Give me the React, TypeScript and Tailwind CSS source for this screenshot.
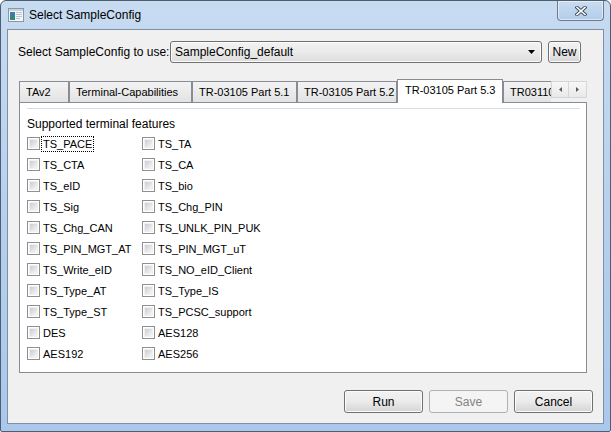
import React from "react";

const Checkbox = ({ label, focus }: { label: string; focus?: boolean }) => (
  <div className="flex items-center h-[21px]">
    <div className="w-[13px] h-[13px] border border-[#8e8f8f] bg-white p-[1px] shrink-0">
      <div className="w-full h-full border border-[#f0f0f0] bg-gradient-to-br from-[#c9cdd3] to-[#f7f7f7]" />
    </div>
    <span
      className={
        focus
          ? "ml-[1px] px-[1px] border border-dotted border-black leading-[14px] whitespace-nowrap text-[11px]"
          : "ml-[1px] px-[1px] border border-transparent leading-[14px] whitespace-nowrap text-[11px]"
      }
    >
      {label}
    </span>
  </div>
);

const Tab = ({ label, w }: { label: string; w: string }) => (
  <div
    className={
      "h-[21px] shrink-0 border border-b-0 border-[#898c95] bg-gradient-to-b from-[#f3f3f3] to-[#e3e3e3] pl-[6px] flex items-center whitespace-nowrap overflow-hidden text-[11px] " +
      w
    }
  >
    {label}
  </div>
);

const Btn = ({ label, disabled, w }: { label: string; disabled?: boolean; w: string }) =>
  disabled ? (
    <div
      className={
        "h-[23px] rounded-[3px] border border-[#adb2b5] bg-[#f4f4f4] text-[#838383] flex items-center justify-center " + w
      }
    >
      {label}
    </div>
  ) : (
    <div
      className={
        "h-[23px] rounded-[3px] border border-[#707070] bg-gradient-to-b from-[#f2f2f2] via-[#ebebeb] to-[#d4d4d4] shadow-[inset_0_0_0_1px_#fcfcfc] flex items-center justify-center " +
        w
      }
    >
      {label}
    </div>
  );

const col1 = [
  "TS_PACE",
  "TS_CTA",
  "TS_eID",
  "TS_Sig",
  "TS_Chg_CAN",
  "TS_PIN_MGT_AT",
  "TS_Write_eID",
  "TS_Type_AT",
  "TS_Type_ST",
  "DES",
  "AES192",
];
const col2 = [
  "TS_TA",
  "TS_CA",
  "TS_bio",
  "TS_Chg_PIN",
  "TS_UNLK_PIN_PUK",
  "TS_PIN_MGT_uT",
  "TS_NO_eID_Client",
  "TS_Type_IS",
  "TS_PCSC_support",
  "AES128",
  "AES256",
];

export default function App() {
  return (
    <div className="w-[611px] h-[432px] bg-white">
      <div className="w-[611px] h-[432px] rounded-t-[6px] rounded-b-[2px] border border-[#4f5d70] bg-gradient-to-b from-[#c7dbf1] via-[#b6d0ed] to-[#a9c8eb] flex flex-col overflow-hidden font-['Liberation_Sans',Arial,sans-serif] text-[12px] text-black">
        {/* Title bar */}
        <div className="h-[28px] flex items-center shrink-0">
          <svg width="16" height="16" viewBox="0 0 16 16" className="ml-[7px] shrink-0">
            <rect x="0.5" y="1.5" width="15" height="13" fill="#f4f6f8" stroke="#8c96a0" />
            <rect x="1" y="2" width="14" height="2" fill="#c5d3e0" />
            <rect x="2" y="5" width="5" height="8" fill="#2e8a7c" />
            <rect x="2" y="5" width="5" height="3" fill="#3f79b8" />
            <rect x="8" y="5" width="6" height="1" fill="#b8c4cf" />
            <rect x="8" y="7" width="6" height="1" fill="#b8c4cf" />
            <rect x="8" y="9" width="6" height="1" fill="#b8c4cf" />
            <rect x="8" y="11" width="4" height="1" fill="#b8c4cf" />
          </svg>
          <span className="ml-[5px]">Select SampleConfig</span>
          <div className="ml-auto mr-[6px] self-start w-[47px] h-[20px] rounded-b-[4px] border border-t-0 border-[#6b7a8e] bg-gradient-to-b from-[#c9dcf1] to-[#b3cdea] shadow-[inset_0_0_0_1px_rgba(255,255,255,0.55)] flex items-center justify-center">
            <svg width="12" height="10" viewBox="0 0 12 10">
              <path d="M2 1.5 L10 8.5 M10 1.5 L2 8.5" stroke="#3c4858" strokeWidth="3.4" strokeLinecap="square" />
              <path d="M2 1.5 L10 8.5 M10 1.5 L2 8.5" stroke="#ffffff" strokeWidth="1.6" strokeLinecap="square" />
            </svg>
          </div>
        </div>

        {/* Client area */}
        <div className="mx-[6px] mb-[7px] flex-1 border border-[#7f8fa4] bg-[#f0f0f0] flex flex-col">
          {/* Row 1 */}
          <div className="mt-[11px] pl-[10px] h-[22px] flex items-center">
            <div className="w-[152px] shrink-0 whitespace-nowrap">Select SampleConfig to use:</div>
            <div className="w-[372px] h-[22px] rounded-[3px] border border-[#707070] bg-gradient-to-b from-[#f2f2f2] via-[#ebebeb] to-[#dddddd] shadow-[inset_0_0_0_1px_#fcfcfc] flex items-center pl-[4px] pr-[6px]">
              <span className="flex-1">SampleConfig_default</span>
              <svg width="7" height="4" viewBox="0 0 7 4">
                <path d="M0 0 L7 0 L3.5 4 Z" fill="#000" />
              </svg>
            </div>
            <div className="ml-[6px] w-[33px] h-[22px] rounded-[3px] border border-[#707070] bg-gradient-to-b from-[#f2f2f2] via-[#ebebeb] to-[#d4d4d4] shadow-[inset_0_0_0_1px_#fcfcfc] flex items-center justify-center">
              New
            </div>
          </div>

          {/* Tabs */}
          <div className="mt-[16px] ml-[11px] w-[568px] flex flex-col">
            <div className="h-[23px] flex items-end">
              <Tab label="TAv2" w="w-[50px]" />
              <Tab label="Terminal-Capabilities" w="w-[123px]" />
              <Tab label="TR-03105 Part 5.1" w="w-[105px]" />
              <Tab label="TR-03105 Part 5.2" w="w-[100px]" />
              <div className="relative z-10 -mb-px h-[24px] w-[106px] shrink-0 border border-b-0 border-[#898c95] bg-white pl-[7px] pb-[3px] flex items-center whitespace-nowrap text-[11px]">
                TR-03105 Part 5.3
              </div>
              <div className="h-[21px] w-[48px] shrink-0 border-t border-l border-[#898c95] bg-gradient-to-b from-[#f3f3f3] to-[#e3e3e3] pl-[6px] flex items-center whitespace-nowrap overflow-hidden text-[11px]">
                TR03110
              </div>
              <div className="self-start mt-[2px] flex">
                <div className="w-[18px] h-[17px] border border-[#d6d6d6] bg-gradient-to-b from-[#f7f7f7] to-[#e9e9e9] flex items-center justify-center">
                  <svg width="3" height="5" viewBox="0 0 3 5">
                    <path d="M3 0 L0 2.5 L3 5 Z" fill="#4d5b6e" />
                  </svg>
                </div>
                <div className="w-[18px] h-[17px] border border-l-0 border-[#d6d6d6] bg-gradient-to-b from-[#f7f7f7] to-[#e9e9e9] flex items-center justify-center">
                  <svg width="3" height="5" viewBox="0 0 3 5">
                    <path d="M0 0 L3 2.5 L0 5 Z" fill="#4d5b6e" />
                  </svg>
                </div>
              </div>
            </div>
            <div className="h-[271px] border border-[#898c95] bg-white flex flex-col">
              <div className="mt-[5px] ml-[7px] mr-[6px] h-px bg-[#d5dfe5]" />
              <div className="mt-[7px] pl-[7px] h-[16px] leading-[16px]">Supported terminal features</div>
              <div className="mt-[1px] pl-[7px] flex">
                <div className="w-[115px] flex flex-col">
                  {col1.map((l, i) => (
                    <Checkbox key={l} label={l} focus={i === 0} />
                  ))}
                </div>
                <div className="flex flex-col">
                  {col2.map((l) => (
                    <Checkbox key={l} label={l} />
                  ))}
                </div>
              </div>
            </div>
          </div>

          {/* Buttons */}
          <div className="mt-[17px] pr-[10px] flex justify-end gap-[6px]">
            <Btn label="Run" w="w-[79px]" />
            <Btn label="Save" disabled w="w-[79px]" />
            <Btn label="Cancel" w="w-[79px]" />
          </div>
        </div>
      </div>
    </div>
  );
}
